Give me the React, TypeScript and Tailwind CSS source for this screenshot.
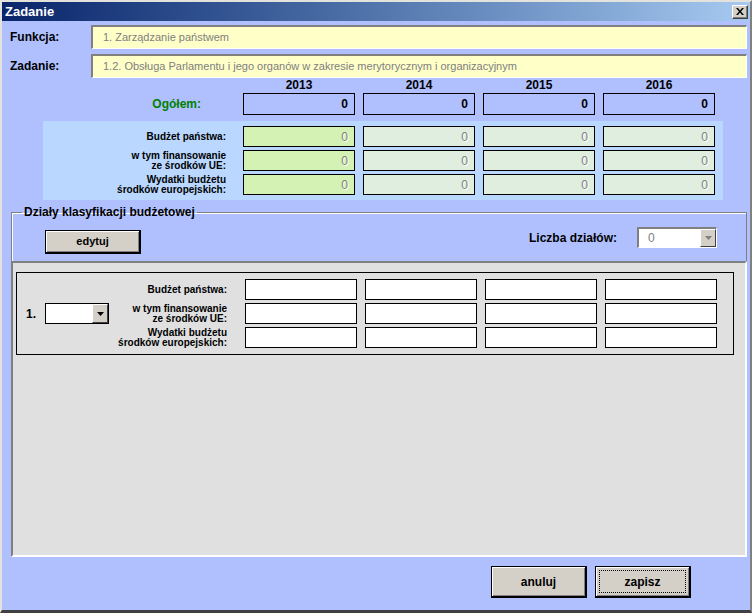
import React from "react";

const YEARS = ["2013", "2014", "2015", "2016"];

const PANEL_ROWS = [
  ["Budżet państwa:"],
  ["w tym finansowanie", "ze środków UE:"],
  ["Wydatki budżetu", "środków europejskich:"],
];

function Arrow({ color }: { color: string }) {
  return (
    <svg width="7" height="4" viewBox="0 0 7 4">
      <path d="M0 0h7L3.5 4z" fill={color} />
    </svg>
  );
}

function RowLabel({ lines }: { lines: string[] }) {
  return (
    <div className="flex flex-col justify-center text-right font-bold text-[10px] leading-[10px] text-black">
      {lines.map((l) => (
        <span key={l}>{l}</span>
      ))}
    </div>
  );
}

function WinButton({ label, focused }: { label: string; focused?: boolean }) {
  return (
    <button className="w-[96px] h-[32px] bg-[#d4d0c8] border border-black border-r-2 border-b-2 shadow-[inset_1px_1px_0_#fff,inset_-1px_-1px_0_#808080] p-[3px] flex">
      <span
        className={
          "flex-1 flex items-center justify-center font-bold text-[12px] text-black " +
          (focused ? "border border-dotted border-black" : "")
        }
      >
        {label}
      </span>
    </button>
  );
}

export default function App() {
  return (
    <div className="w-[752px] h-[613px] flex flex-col bg-[#b0c0ff] border-t-2 border-l-2 border-[#e4e2dc] border-r-2 border-r-[#808080] border-b-[3px] border-b-[#404040] font-['Liberation_Sans',Arial,sans-serif] overflow-hidden">
      {/* title bar */}
      <div className="h-[19px] shrink-0 flex items-center justify-between pl-[3px] pr-[2px] bg-linear-to-r from-[#0a246a] to-[#a6caf0]">
        <span className="text-white font-bold text-[13px] leading-none">Zadanie</span>
        <div className="w-[16px] h-[14px] bg-[#d4d0c8] border border-white border-r-[#404040] border-b-[#404040] shadow-[inset_-1px_-1px_0_#808080] flex items-center justify-center">
          <svg width="8" height="7" viewBox="0 0 8 7">
            <path d="M0 0h2l2 2.5L6 0h2L5 3.5 8 7H6L4 4.5 2 7H0l3-3.5z" fill="#000" />
          </svg>
        </div>
      </div>

      {/* body */}
      <div className="flex-1 flex flex-col">
        <div className="flex items-center mt-[4px]">
          <div className="w-[89px] pl-[8px] font-bold text-[12px] text-black">Funkcja:</div>
          <div className="w-[656px] h-[24px] bg-[#ffffc8] border-t-2 border-l-2 border-[#808080] border-b border-r border-b-white border-r-white flex items-center pl-[10px] text-[11px] text-[#808080]">
            1. Zarządzanie państwem
          </div>
        </div>
        <div className="flex items-center mt-[5px]">
          <div className="w-[89px] pl-[8px] font-bold text-[12px] text-black">Zadanie:</div>
          <div className="w-[656px] h-[24px] bg-[#ffffc8] border-t-2 border-l-2 border-[#808080] border-b border-r border-b-white border-r-white flex items-center pl-[10px] text-[11px] text-[#808080]">
            1.2. Obsługa Parlamentu i jego organów w zakresie merytorycznym i organizacyjnym
          </div>
        </div>

        {/* years */}
        <div className="flex ml-[241px] gap-[8px] h-[15px]">
          {YEARS.map((y) => (
            <div key={y} className="w-[112px] text-center font-bold text-[12px] leading-[15px] text-black">
              {y}
            </div>
          ))}
        </div>
        <div className="flex items-center">
          <div className="w-[241px] pr-[42px] text-right font-bold text-[12px] text-[#008000]">Ogółem:</div>
          <div className="flex gap-[8px]">
            {YEARS.map((y) => (
              <div
                key={y}
                className="w-[112px] h-[22px] border border-black flex items-center justify-end pr-[6px] font-bold text-[12px] text-black"
              >
                0
              </div>
            ))}
          </div>
        </div>

        {/* summary panel */}
        <div className="ml-[41px] mt-[6px] w-[680px] h-[79px] bg-[#b9d7ff] pt-[5px] flex flex-col gap-[3px]">
          {PANEL_ROWS.map((lines) => (
            <div key={lines[0]} className="flex items-center h-[21px]">
              <div className="w-[200px] pr-[17px] flex justify-end">
                <RowLabel lines={lines} />
              </div>
              <div className="flex gap-[8px]">
                {YEARS.map((y, i) => (
                  <div
                    key={y}
                    className={
                      "w-[112px] h-[21px] border border-black flex items-center justify-end pr-[6px] text-[12px] text-[#808080] [text-shadow:1px_1px_0_#fff] " +
                      (i === 0 ? "bg-[#d4f2b4]" : "bg-[#e0eee0]")
                    }
                  >
                    0
                  </div>
                ))}
              </div>
            </div>
          ))}
        </div>

        {/* group box */}
        <fieldset className="ml-[9px] mt-[5px] w-[736px] border-t border-l border-r border-[#808080] shadow-[inset_1px_1px_0_#fff] pl-[10px] pt-[8px] pb-[7px]">
          <legend className="px-[2px] font-bold text-[12px] leading-[14px] text-black">
            Działy klasyfikacji budżetowej
          </legend>
          <div className="flex items-start h-[27px]">
            <button className="ml-[23px] mt-[3px] w-[96px] h-[24px] bg-[#d4d0c8] border border-black border-r-2 border-b-2 shadow-[inset_1px_1px_0_#fff,inset_-1px_-1px_0_#808080] font-bold text-[11px] text-black">
              edytuj
            </button>
            <div className="flex-1" />
            <div className="h-[21px] flex items-center font-bold text-[12px] text-black">Liczba działów:</div>
            <div className="ml-[20px] mr-[29px] w-[80px] h-[21px] bg-white border-t-2 border-l-2 border-[#808080] border-b border-r border-b-white border-r-white flex items-center">
              <span className="flex-1 pl-[9px] text-[12px] text-[#808080]">0</span>
              <div className="w-[16px] h-full bg-[#d4d0c8] border border-white border-r-[#404040] border-b-[#404040] flex items-center justify-center">
                <Arrow color="#808080" />
              </div>
            </div>
          </div>
        </fieldset>

        {/* lower panel */}
        <div className="ml-[9px] w-[736px] h-[296px] bg-[#e0e0e0] border-2 border-t-[#808080] border-l-[#808080] border-b-white border-r-white pt-[9px] pl-[3px]">
          <div className="w-[718px] h-[83px] border border-black flex items-center">
            <div className="w-[95px] flex items-center pl-[9px]">
              <span className="w-[19px] font-bold text-[12px] text-black">1.</span>
              <div className="w-[64px] h-[21px] bg-white border border-black flex justify-end">
                <div className="w-[16px] h-full bg-[#d4d0c8] border border-white border-r-[#404040] border-b-[#404040] flex items-center justify-center">
                  <Arrow color="#000" />
                </div>
              </div>
            </div>
            <div className="flex flex-col gap-[3px]">
              {PANEL_ROWS.map((lines) => (
                <div key={lines[0]} className="flex items-center h-[21px]">
                  <div className="w-[115px] flex justify-end">
                    <RowLabel lines={lines} />
                  </div>
                  <div className="ml-[18px] flex gap-[8px]">
                    {YEARS.map((y) => (
                      <div key={y} className="w-[112px] h-[21px] bg-white border border-black" />
                    ))}
                  </div>
                </div>
              ))}
            </div>
          </div>
        </div>

        {/* buttons */}
        <div className="flex justify-end gap-[8px] mt-[9px] mr-[59px]">
          <WinButton label="anuluj" />
          <WinButton label="zapisz" focused />
        </div>
      </div>
    </div>
  );
}
